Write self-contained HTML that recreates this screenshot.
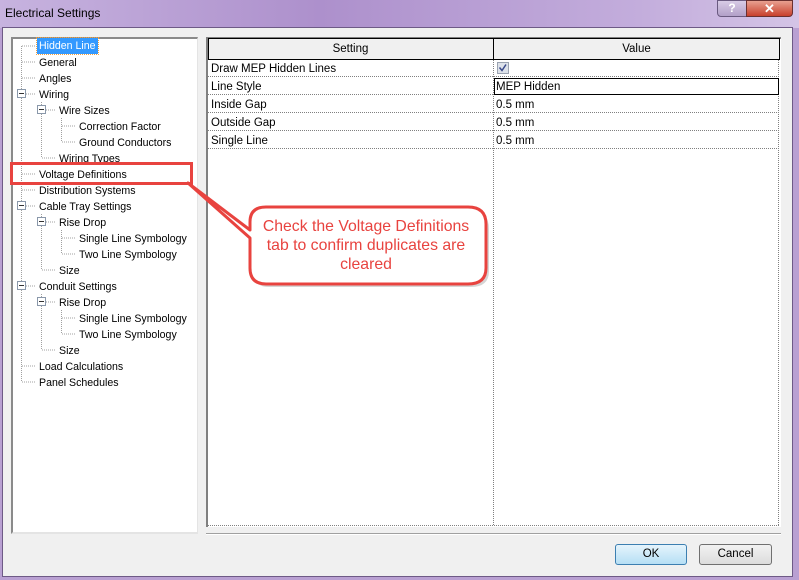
<!DOCTYPE html>
<html><head><meta charset="utf-8"><style>
*{margin:0;padding:0;box-sizing:border-box}
body{width:799px;height:580px;overflow:hidden;background:#b9a0d2;font-family:"Liberation Sans",sans-serif;font-size:11.5px;color:#000;position:relative}
.abs{position:absolute}
.title{left:0;top:0;width:799px;height:28px;background:linear-gradient(90deg,#c7b3df,#ad90cc 40%,#c3addc 80%,#d4c4e6)}
.body{left:2px;top:27px;width:791px;height:550px;background:#f0f0f0;border:1px solid #6e5a86}
.tree{left:11px;top:37px;width:187px;height:497px;background:#fff;border-left:2px solid #8a8a8a;border-top:2px solid #8a8a8a;border-right:1px solid #e4e4e4;border-bottom:2px solid #e4e4e4}
.ti{position:absolute;height:16px;line-height:16px;white-space:nowrap;font-size:10.6px;margin-top:1px}
.grid{left:206px;top:37px;width:575px;height:490px;background:#fff;border-left:2px solid #808080;border-top:2px solid #808080}
.cell{position:absolute;height:18px;line-height:18px;padding-left:3px;white-space:nowrap;margin-top:1px}
.btn{position:absolute;height:21px;line-height:19px;text-align:center;border:1px solid #707070;border-radius:3px;background:linear-gradient(#f2f2f2,#dcdcdc)}
</style></head><body>
<div class="abs title"></div>
<div class="abs" style="left:5px;top:6px;font-size:12px">Electrical Settings</div>
<div class="abs" style="left:717px;top:0;width:30px;height:17px;border:1px solid #6a5a80;border-radius:0 0 0 4px;background:linear-gradient(#d8cbe6,#b2a0c8);text-align:center;color:#fff;font-weight:bold;font-size:12px;line-height:15px">?</div>
<div class="abs" style="left:746px;top:0;width:47px;height:17px;border:1px solid #6a3030;border-radius:0 0 4px 0;background:linear-gradient(#e8a090,#c8402c);text-align:center;color:#fff;font-weight:bold;font-size:13px;line-height:15px">✕</div>
<div class="abs body"></div>
<div class="abs tree"></div>
<svg class="abs" style="left:0;top:0" width="200" height="400">
<g stroke="#a0a0a0" stroke-dasharray="1 1" stroke-width="1">
<line x1="21.5" y1="46" x2="21.5" y2="382"/>
<line x1="41.5" y1="102" x2="41.5" y2="158"/>
<line x1="61.5" y1="118" x2="61.5" y2="142"/>
<line x1="41.5" y1="214" x2="41.5" y2="270"/>
<line x1="61.5" y1="230" x2="61.5" y2="254"/>
<line x1="41.5" y1="294" x2="41.5" y2="350"/>
<line x1="61.5" y1="310" x2="61.5" y2="334"/>
<path d="M22 46h14M22 62h14M22 78h14M22 94h14M42 110h14M62 126h14M62 142h14M42 158h14M22 174h14M22 190h14M22 206h14M42 222h14M62 238h14M62 254h14M42 270h14M22 286h14M42 302h14M62 318h14M62 334h14M42 350h14M22 366h14M22 382h14"/>
</g>
<g fill="#fff" stroke="#8a98aa">
<rect x="17.5" y="89.5" width="8" height="8"/><rect x="37.5" y="105.5" width="8" height="8"/>
<rect x="17.5" y="201.5" width="8" height="8"/><rect x="37.5" y="217.5" width="8" height="8"/>
<rect x="17.5" y="281.5" width="8" height="8"/><rect x="37.5" y="297.5" width="8" height="8"/>
</g>
<g stroke="#333"><path d="M19 93.5h5M39 109.5h5M19 205.5h5M39 221.5h5M19 285.5h5M39 301.5h5"/></g>
</svg>
<div class="ti" style="left:37px;top:37px;background:#3399ff;color:#fff;padding:0 2px;outline:1px dotted #f0a040">Hidden Line</div>
<div class="ti" style="left:39px;top:54px">General</div>
<div class="ti" style="left:39px;top:70px">Angles</div>
<div class="ti" style="left:39px;top:86px">Wiring</div>
<div class="ti" style="left:59px;top:102px">Wire Sizes</div>
<div class="ti" style="left:79px;top:118px">Correction Factor</div>
<div class="ti" style="left:79px;top:134px">Ground Conductors</div>
<div class="ti" style="left:59px;top:150px">Wiring Types</div>
<div class="ti" style="left:39px;top:166px">Voltage Definitions</div>
<div class="ti" style="left:39px;top:182px">Distribution Systems</div>
<div class="ti" style="left:39px;top:198px">Cable Tray Settings</div>
<div class="ti" style="left:59px;top:214px">Rise Drop</div>
<div class="ti" style="left:79px;top:230px">Single Line Symbology</div>
<div class="ti" style="left:79px;top:246px">Two Line Symbology</div>
<div class="ti" style="left:59px;top:262px">Size</div>
<div class="ti" style="left:39px;top:278px">Conduit Settings</div>
<div class="ti" style="left:59px;top:294px">Rise Drop</div>
<div class="ti" style="left:79px;top:310px">Single Line Symbology</div>
<div class="ti" style="left:79px;top:326px">Two Line Symbology</div>
<div class="ti" style="left:59px;top:342px">Size</div>
<div class="ti" style="left:39px;top:358px">Load Calculations</div>
<div class="ti" style="left:39px;top:374px">Panel Schedules</div>
<div class="abs" style="left:10px;top:162px;width:183px;height:23px;border:3px solid #e8433f"></div>

<div class="abs grid"></div>
<svg class="abs" style="left:0;top:0" width="799" height="580">
<rect x="208.5" y="38.5" width="571" height="21" fill="#f0f0f0" stroke="#000"/>
<line x1="493.5" y1="38" x2="493.5" y2="60" stroke="#000"/>
<g stroke="#808080" stroke-dasharray="1 1">
<line x1="493.5" y1="60" x2="493.5" y2="525"/>
<line x1="778.5" y1="60" x2="778.5" y2="525"/>
<line x1="208" y1="76.5" x2="779" y2="76.5"/>
<line x1="208" y1="94.5" x2="779" y2="94.5"/>
<line x1="208" y1="112.5" x2="779" y2="112.5"/>
<line x1="208" y1="130.5" x2="779" y2="130.5"/>
<line x1="208" y1="148.5" x2="779" y2="148.5"/>
<line x1="208" y1="525.5" x2="779" y2="525.5"/>
</g>
<rect x="494.5" y="78.5" width="284" height="16" fill="none" stroke="#000"/>
<rect x="497.5" y="62.5" width="11" height="11" fill="#dde2ea" stroke="#9aa2b0"/>
<path d="M499.5 67.5l2.5 3 4-6" fill="none" stroke="#3a4a8a" stroke-width="1.5"/>
<line x1="206" y1="533.5" x2="781" y2="533.5" stroke="#a0a0a0"/>
<line x1="206" y1="534.5" x2="781" y2="534.5" stroke="#fff"/>
<g filter="none">
<path d="M262 212 Q250 212 250 226 V268 Q250 284 266 284 H468 Q486 284 486 268 V226 Q486 208 468 208 H266" fill="#888" opacity=".35" transform="translate(3,3)"/>
<path d="M188 183 L250 238 V268 Q250 284 266 284 H468 Q486 284 486 268 V224 Q486 207 468 207 H266 Q250 207 250 222 V230 Z" fill="#fff" stroke="#e8433f" stroke-width="3" stroke-linejoin="round"/>
</g>
<text x="366" y="231" text-anchor="middle" fill="#e8433f" font-family="Liberation Sans" font-size="15.8">Check the Voltage Definitions</text>
<text x="366" y="250" text-anchor="middle" fill="#e8433f" font-family="Liberation Sans" font-size="15.8">tab to confirm duplicates are</text>
<text x="366" y="269" text-anchor="middle" fill="#e8433f" font-family="Liberation Sans" font-size="15.8">cleared</text>
</svg>
<div class="cell" style="left:208px;top:39px;width:285px;text-align:center;padding:0">Setting</div>
<div class="cell" style="left:494px;top:39px;width:285px;text-align:center;padding:0">Value</div>
<div class="cell" style="left:208px;top:59px">Draw MEP Hidden Lines</div>
<div class="cell" style="left:208px;top:77px">Line Style</div>
<div class="cell" style="left:208px;top:95px">Inside Gap</div>
<div class="cell" style="left:208px;top:113px">Outside Gap</div>
<div class="cell" style="left:208px;top:131px">Single Line</div>
<div class="cell" style="left:493px;top:77px">MEP Hidden</div>
<div class="cell" style="left:493px;top:95px">0.5 mm</div>
<div class="cell" style="left:493px;top:113px">0.5 mm</div>
<div class="cell" style="left:493px;top:131px">0.5 mm</div>

<div class="btn" style="left:615px;top:544px;width:72px;border-color:#3c7fb1;background:linear-gradient(#e5f4fc,#b6dff5)">OK</div>
<div class="btn" style="left:699px;top:544px;width:73px">Cancel</div>
</body></html>
